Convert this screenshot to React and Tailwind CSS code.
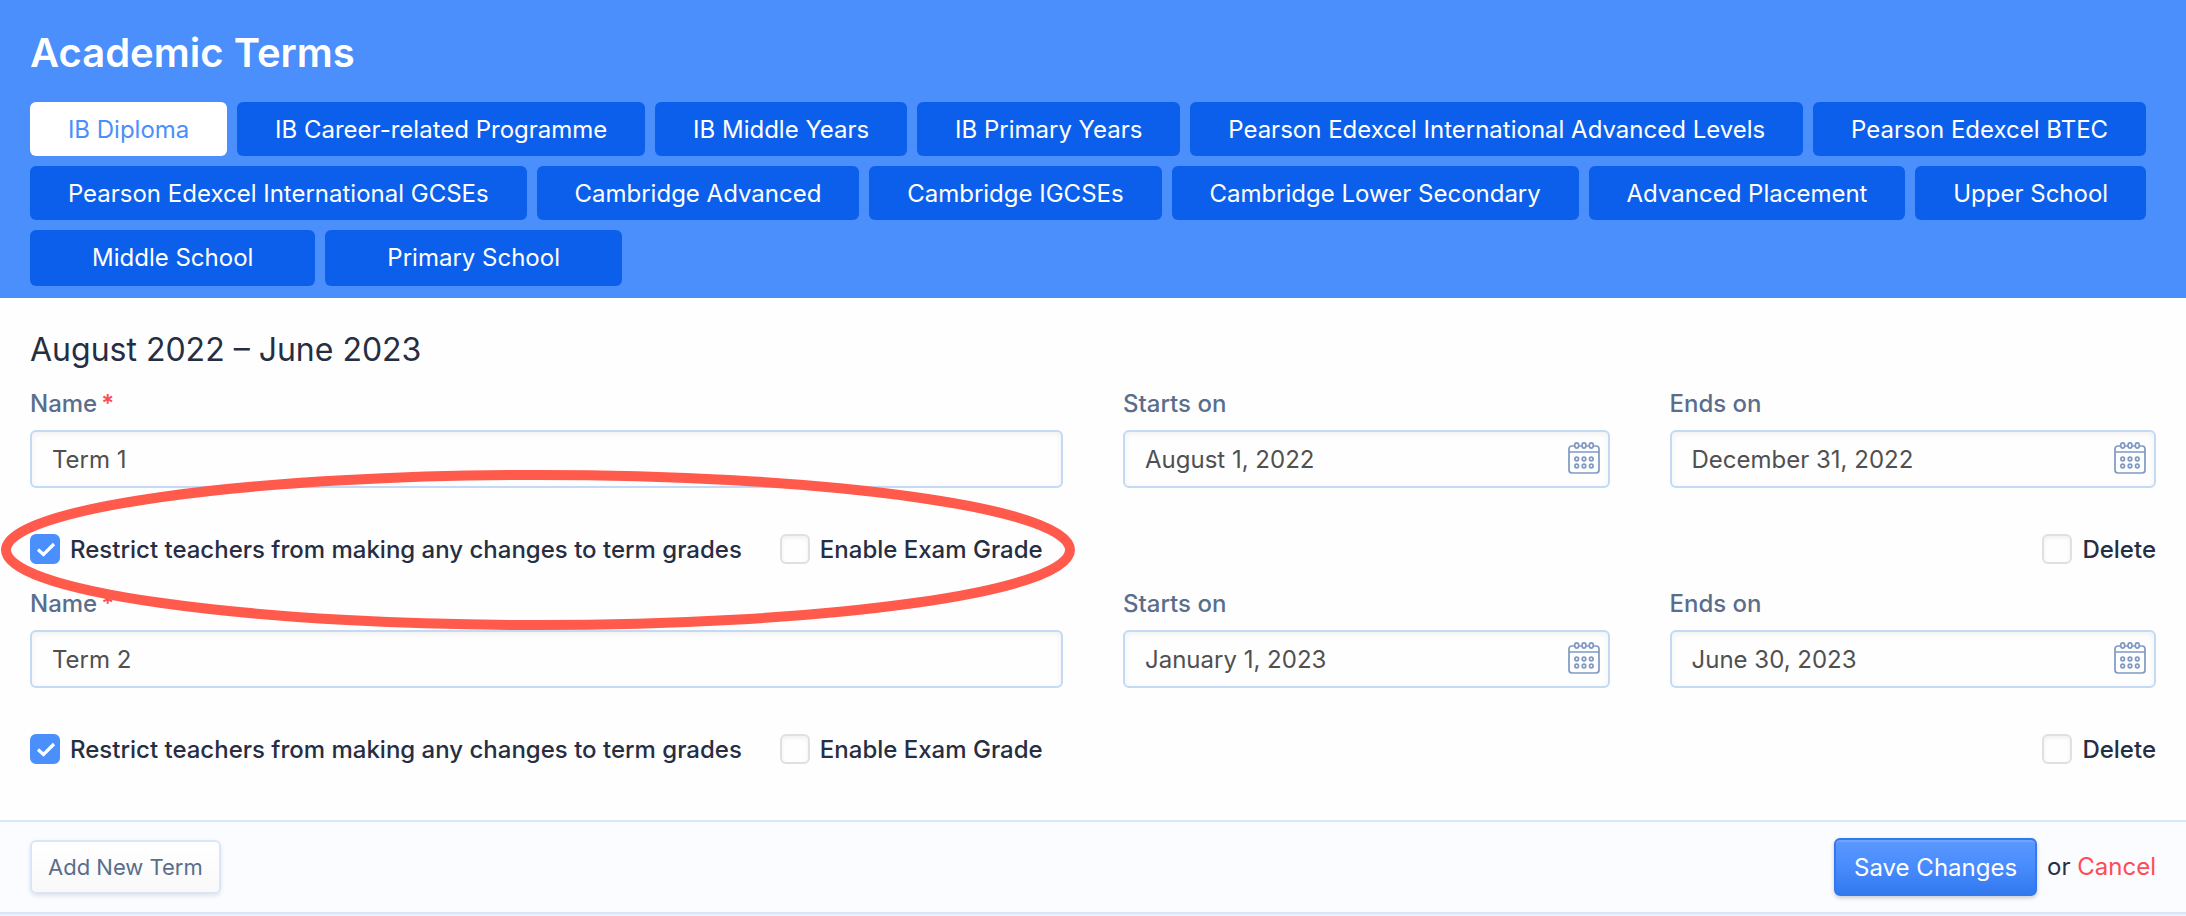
import { useState } from 'react';

const programRows = [
  ['IB Diploma', 'IB Career-related Programme', 'IB Middle Years', 'IB Primary Years', 'Pearson Edexcel International Advanced Levels', 'Pearson Edexcel BTEC'],
  ['Pearson Edexcel International GCSEs', 'Cambridge Advanced', 'Cambridge IGCSEs', 'Cambridge Lower Secondary', 'Advanced Placement', 'Upper School'],
  ['Middle School', 'Primary School'],
];

const terms = [
  { id: 1, name: 'Term 1', startsOn: 'August 1, 2022', endsOn: 'December 31, 2022' },
  { id: 2, name: 'Term 2', startsOn: 'January 1, 2023', endsOn: 'June 30, 2023' },
];

const CalendarIcon = () => (
  <svg viewBox="0 0 32 32" className="size-8" fill="none" stroke="#7f99c2" strokeWidth="1.7" aria-hidden="true">
    <path d="M6.500 4H4a3 3 0 0 0-3 3v21a3 3 0 0 0 3 3h24a3 3 0 0 0 3-3V7a3 3 0 0 0-3-3h-2.500" />
    <path d="M1 10h30M11 4h3M18 4h3" />
    {[8.7, 16, 23.3].map((x) => (
      <g key={x}>
        <ellipse cx={x} cy="3.500" rx="2" ry="2.600" />
        <circle cx={x} cy="17" r="1.800" />
        <circle cx={x} cy="24" r="1.800" />
      </g>
    ))}
  </svg>
);

const Checkbox = ({ label, defaultChecked }) => (
  <label className="flex items-center gap-[10px] font-medium text-[#262e43]">
    <span className="relative flex">
      <input
        type="checkbox"
        defaultChecked={defaultChecked}
        className="peer appearance-none size-[30px] rounded-md border-2 border-[#e0e0e0] bg-[#fefefe] shadow-[inset_0_2px_4px_rgba(0,0,0,0.06)] checked:border-[#4a8ffb] checked:bg-[#4a8ffb] checked:shadow-none"
      />
      <svg viewBox="0 0 30 30" className="absolute inset-0 hidden peer-checked:block pointer-events-none" fill="none" stroke="white" strokeWidth="3.2" aria-hidden="true">
        <path d="M8 15.500l5.500 5L24 10" />
      </svg>
    </span>
    <span className="pt-0.5">{label}</span>
  </label>
);

const Field = ({ id, label, value, required, date, className = '' }) => (
  <div className={className}>
    <label htmlFor={id} className="flex gap-1 font-medium text-[#5a6e8c] leading-9 mb-2">
      {label}
      {required && <span className="font-semibold text-[#ff4b55]">*</span>}
    </label>
    <div className="relative">
      <input
        id={id}
        type="text"
        defaultValue={value}
        className="block w-full h-[58px] px-5 rounded-md border-2 border-[#c3d9f4] bg-[#fefefe] text-[#505050] shadow-[inset_0_2px_6px_rgba(0,0,0,0.06)]"
      />
      {date && (
        <button type="button" aria-label={`Pick date: ${label}`} className="absolute right-[10px] top-3">
          <CalendarIcon />
        </button>
      )}
    </div>
  </div>
);

const TermFields = ({ term }) => (
  <div className="mb-[22px]">
    <div className="grid grid-cols-4 gap-[60px]">
      <Field id={`name-${term.id}`} label="Name" value={term.name} required className="col-span-2" />
      <Field id={`starts-${term.id}`} label="Starts on" value={term.startsOn} date />
      <Field id={`ends-${term.id}`} label="Ends on" value={term.endsOn} date />
    </div>
    <div className="relative flex items-center gap-[38px] mt-[46px] h-[30px]">
      <Checkbox label="Restrict teachers from making any changes to term grades" defaultChecked />
      <Checkbox label="Enable Exam Grade" />
      <div className="ml-auto">
        <Checkbox label="Delete" />
      </div>
      {/* Highlight around the grade options */}
      {term.id === 1 && (
        <svg className="absolute z-10 left-[-30px] top-[-64px] w-[1076px] h-[160px] pointer-events-none" viewBox="0 0 1076 160" fill="none" aria-hidden="true">
          <ellipse cx="538" cy="80" rx="532" ry="75" stroke="#ff5a4c" strokeWidth="10" />
        </svg>
      )}
    </div>
  </div>
);

function App() {
  const [active, setActive] = useState('IB Diploma');

  return (
    <div className="min-h-screen bg-[#fefefe] font-['Inter',sans-serif] text-[24px] leading-8 text-[#262e43]">
      <header className="bg-[#4a8ffb] pl-[30px] pr-10 pt-6 pb-3">
        <h1 className="text-[40px] leading-[58px] font-semibold text-white mb-5">Academic Terms</h1>
        <nav className="flex flex-col gap-[10px]">
          {programRows.map((row, i) => (
            <div key={i} className="flex gap-[10px]">
              {row.map((name) => (
                <button
                  key={name}
                  type="button"
                  onClick={() => setActive(name)}
                  className={`whitespace-nowrap rounded-md ${i === 2 ? 'h-14 px-[62px]' : 'h-[54px] pt-0.5 flex-auto'} ${active === name ? 'bg-white text-[#4a8ffb]' : 'bg-[#0c5fea] text-white'}`}
                >
                  {name}
                </button>
              ))}
            </div>
          ))}
        </nav>
      </header>

      <main className="px-[30px] pt-7 pb-[34px]">
        <h2 className="text-[32px] leading-[48px] mb-3">August 2022 – June 2023</h2>
        {terms.map((term) => (
          <TermFields key={term.id} term={term} />
        ))}
      </main>

      <footer className="flex items-center justify-between border-y-2 border-[#d8e6f7] bg-[#fafcff] px-[30px] h-[94px] shadow-[0_2px_0_#ebf2fb]">
        <button type="button" className="h-[54px] px-4 rounded-md border-2 border-[#d8e6f7] bg-linear-to-b from-white to-[#f9f9f9] text-[22px] text-[#5a6e8c] shadow-[0_2px_4px_rgba(0,0,0,0.1)]">
          Add New Term
        </button>
        <div className="flex items-center gap-[10px]">
          <button type="button" className="h-[58px] px-[18px] pt-0.5 rounded-md border-2 border-[#3279ee] bg-linear-to-b from-[#5c98ff] via-[#488bfd] to-[#3279ee] text-white shadow-[inset_0_2px_0_#6ea5ff,0_2px_4px_rgba(0,0,0,0.2)]">
            Save Changes
          </button>
          <span>
            or <a href="#cancel" className="text-[#ff4b55]">Cancel</a>
          </span>
        </div>
      </footer>
    </div>
  );
}

export default App;
